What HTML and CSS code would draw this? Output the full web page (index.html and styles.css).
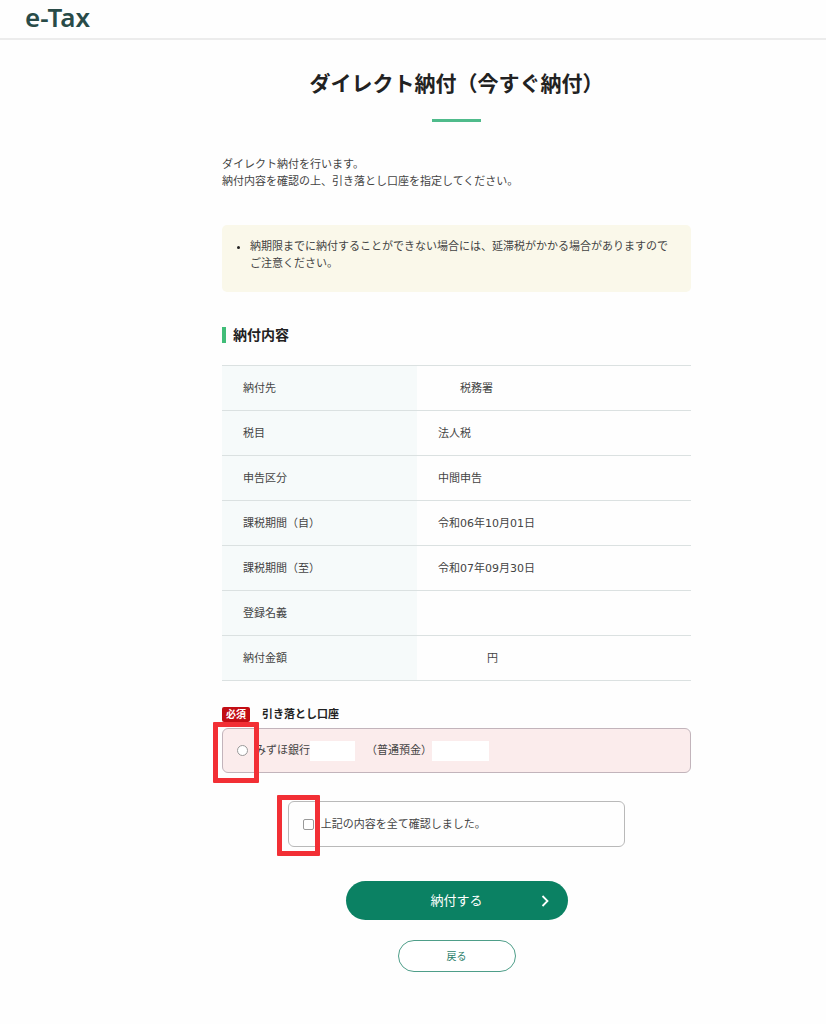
FILE: index.html
```html
<!DOCTYPE html>
<html lang="ja">
<head>
<meta charset="utf-8">
<meta name="viewport" content="width=device-width, initial-scale=1">
<title>ダイレクト納付（今すぐ納付）</title>
<link rel="stylesheet" href="styles.css">
</head>
<body>
<header class="site-header"><span class="logo">e-Tax</span></header>
<main class="content">
  <h1 class="page-title">ダイレクト納付（今すぐ納付）</h1>
  <p class="intro">ダイレクト納付を行います。<br>納付内容を確認の上、引き落とし口座を指定してください。</p>
  <ul class="notice">
    <li>納期限までに納付することができない場合には、延滞税がかかる場合がありますのでご注意ください。</li>
  </ul>
  <h2 class="section-title">納付内容</h2>
  <table class="details">
    <tbody>
      <tr><th scope="row">納付先</th><td><span class="hidden-office"></span>税務署</td></tr>
      <tr><th scope="row">税目</th><td>法人税</td></tr>
      <tr><th scope="row">申告区分</th><td>中間申告</td></tr>
      <tr><th scope="row">課税期間（自）</th><td>令和06年10月01日</td></tr>
      <tr><th scope="row">課税期間（至）</th><td>令和07年09月30日</td></tr>
      <tr><th scope="row">登録名義</th><td></td></tr>
      <tr><th scope="row">納付金額</th><td><span class="hidden-amount"></span>円</td></tr>
    </tbody>
  </table>
  <form class="payment">
    <fieldset class="account">
      <legend class="account-head"><span class="badge">必須</span><span>引き落とし口座</span></legend>
      <div class="option option-required">
        <input class="radio" type="radio" name="account" id="account1">
        <label class="option-label" for="account1">みずほ銀行<span class="mask mask-branch"></span>（普通預金）<span class="mask mask-number"></span></label>
        <span class="marker"></span>
      </div>
    </fieldset>
    <div class="option option-confirm">
      <input class="checkbox" type="checkbox" id="confirm">
      <label class="option-label" for="confirm">上記の内容を全て確認しました。</label>
      <span class="marker"></span>
    </div>
    <div class="actions">
      <button class="btn btn-primary" type="submit">納付する
        <svg class="chevron" viewBox="0 0 8 12" width="8" height="12" aria-hidden="true"><path d="M1.500 1 6.500 6l-5 5" fill="none" stroke="currentColor" stroke-width="1.800"/></svg>
      </button>
      <button class="btn btn-back" type="button">戻る</button>
    </div>
  </form>
</main>
</body>
</html>
```
FILE: styles.css
```css
* { box-sizing: border-box; }

body {
  margin: 0;
  background: #fefefe;
  color: #444;
  font: 11px/17px "DejaVu Sans", "Noto Sans CJK JP", sans-serif;
}

.site-header {
  height: 40px;
  padding: 2px 25px;
  border-bottom: 2px solid #ececec;
}

.logo {
  color: #294b48;
  font: 600 26px/30px "Noto Sans", sans-serif;
}

.content { padding: 28px 135px 52px 222px; }

.page-title {
  margin: 0 0 34px;
  color: #222;
  font-size: 21px;
  line-height: 32px;
  text-align: center;
}

.page-title::after {
  content: "";
  display: block;
  width: 49px;
  height: 3px;
  margin: 19px auto 0;
  background: #4fbb8b;
}

.intro { margin: 0 0 35px; }

.notice {
  margin: 0 0 34px;
  padding: 13px 16px 20px 28px;
  border-radius: 5px;
  background: #faf8ea;
}

.notice li::marker { color: #222; }

.section-title {
  display: flex;
  align-items: center;
  gap: 7px;
  margin: 0 0 21px;
  color: #222;
  font-size: 14px;
  line-height: 18px;
}

.section-title::before {
  content: "";
  width: 4px;
  height: 16px;
  background: #41bd78;
}

.details {
  width: 100%;
  border-spacing: 0;
  border-top: 1px solid #dbe1e1;
}

.details th,
.details td {
  height: 45px;
  padding: 0 21px;
  border-bottom: 1px solid #dbe1e1;
  font-weight: 400;
  text-align: left;
}

.details th {
  width: 195px;
  background: #f6fafa;
}

.hidden-office,
.hidden-amount { display: inline-block; }
.hidden-office { width: 22px; }
.hidden-amount { width: 49px; }

.payment { margin-top: 26px; }

.account {
  min-width: 0;
  margin: 0 0 28px;
  padding: 0;
  border: 0;
}

.account-head {
  display: flex;
  align-items: center;
  gap: 12px;
  height: 15px;
  margin-bottom: 6px;
  padding: 0;
  color: #222;
  font-weight: 700;
}

.badge {
  padding: 0 4px;
  border-radius: 2px;
  background: #c20d14;
  color: #fff;
  font-size: 10px;
  line-height: 15px;
}

.option {
  position: relative;
  display: flex;
  align-items: center;
  height: 45px;
  padding: 0 14px;
  border: 1px solid #b9b9b9;
  border-radius: 6px;
}

.option-required {
  border-color: #c2b4bb;
  background: #fbecec;
}

.option-confirm {
  width: 72%;
  height: 46px;
  margin: 0 auto;
}

.radio,
.checkbox {
  appearance: none;
  flex: none;
  width: 11px;
  height: 11px;
  margin: 0;
  border: 1px solid #999;
  background: #fff;
}

.radio { border-radius: 50%; }
.checkbox { border-radius: 2px; }
.radio:checked { background: #555; }
.checkbox:checked { background: #555; }

.option-label {
  display: flex;
  align-items: center;
  margin-left: 7px;
}

.mask {
  height: 20px;
  background: #fff;
}

.mask-branch {
  width: 45px;
  margin-right: 11px;
}

.mask-number { width: 57px; }

.marker {
  position: absolute;
  top: -7px;
  left: -10px;
  width: 46px;
  height: 61px;
  border: 5px solid #f22f35;
  border-radius: 1px;
  pointer-events: none;
}

.option-confirm .marker {
  left: -12px;
  width: 43px;
}

.actions {
  display: flex;
  flex-direction: column;
  align-items: center;
  gap: 20px;
  margin-top: 34px;
}

.btn {
  border-radius: 20px;
  font-family: inherit;
  text-align: center;
}

.btn-primary {
  position: relative;
  width: 222px;
  height: 39px;
  padding: 0 0 3px;
  border: 0;
  background: #0b8163;
  color: #fff;
  font-size: 13px;
}

.chevron {
  position: absolute;
  top: 14px;
  right: 19px;
}

.btn-back {
  width: 118px;
  height: 32px;
  padding: 0 0 2px;
  border: 1px solid #4e9e89;
  background: #fff;
  color: #2b7e69;
  font-size: 10px;
}
```
